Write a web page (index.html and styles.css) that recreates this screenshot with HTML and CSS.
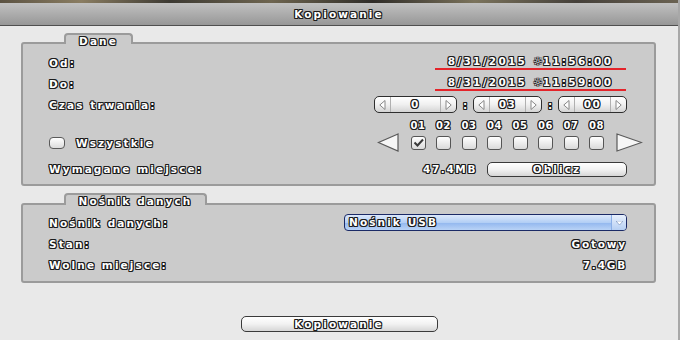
FILE: index.html
```html
<!DOCTYPE html>
<html lang="pl">
<head>
    <meta charset="UTF-8">
    <title>Kopiowanie</title>
    <link rel="stylesheet" href="styles.css">
</head>
<body>
    <div class="window">
        <div class="strip"></div>
        <div class="titlebar">Kopiowanie</div>
        <div class="content">
            <div class="group">
                <div class="tab tab-data">Dane</div>
                <div class="panel">
                    <div class="row">
                        <span>Od:</span>
                        <span class="datefield">8/31/2015 <span class="sun">☼</span>11:56:00</span>
                    </div>
                    <div class="row">
                        <span>Do:</span>
                        <span class="datefield">8/31/2015 <span class="sun">☼</span>11:59:00</span>
                    </div>
                    <div class="row">
                        <span>Czas trwania:</span>
                        <div class="duration">
                            <div class="spin spin-wide">
                                <span class="seg seg-l"><svg width="7" height="10"><polygon points="6,0.5 0.8,5 6,9.5" /></svg></span>
                                <span class="val">0</span>
                                <span class="seg seg-r"><svg width="7" height="10"><polygon points="1,0.5 6.2,5 1,9.5" /></svg></span>
                            </div>
                            <span class="colon">:</span>
                            <div class="spin">
                                <span class="seg seg-l"><svg width="7" height="10"><polygon points="6,0.5 0.8,5 6,9.5" /></svg></span>
                                <span class="val">03</span>
                                <span class="seg seg-r"><svg width="7" height="10"><polygon points="1,0.5 6.2,5 1,9.5" /></svg></span>
                            </div>
                            <span class="colon">:</span>
                            <div class="spin">
                                <span class="seg seg-l"><svg width="7" height="10"><polygon points="6,0.5 0.8,5 6,9.5" /></svg></span>
                                <span class="val">00</span>
                                <span class="seg seg-r"><svg width="7" height="10"><polygon points="1,0.5 6.2,5 1,9.5" /></svg></span>
                            </div>
                        </div>
                    </div>
                    <div class="cams">
                        <div class="all">
                            <span class="allbox"></span>
                            <span>Wszystkie</span>
                        </div>
                        <div class="cam-nav">
                            <svg class="arrow" width="22" height="19"><polygon points="21,1 1.5,9.5 21,18" /></svg>
                            <div class="cam-grid">
                                <span class="num">01</span>
                                <span class="num">02</span>
                                <span class="num">03</span>
                                <span class="num">04</span>
                                <span class="num">05</span>
                                <span class="num">06</span>
                                <span class="num">07</span>
                                <span class="num">08</span>
                                <span class="box checked"><svg width="11" height="9"><polyline points="1.5,4.5 4.5,7.5 10,1.5" /></svg></span>
                                <span class="box"></span>
                                <span class="box"></span>
                                <span class="box"></span>
                                <span class="box"></span>
                                <span class="box"></span>
                                <span class="box"></span>
                                <span class="box"></span>
                            </div>
                            <svg class="arrow arrow-r" width="27" height="19"><polygon points="1,1 25.5,9.5 1,18" /></svg>
                        </div>
                    </div>
                    <div class="row row-size">
                        <span>Wymagane miejsce:</span>
                        <span class="size">47.4MB</span>
                        <span class="btn btn-calc">Oblicz</span>
                    </div>
                </div>
            </div>

            <div class="group group-media">
                <div class="tab tab-media">Nośnik danych</div>
                <div class="panel panel-media">
                    <div class="row">
                        <span>Nośnik danych:</span>
                        <div class="select">
                            <span class="select-text">Nośnik USB</span>
                            <span class="select-btn"><svg width="7" height="4"><polygon points="0,0 7,0 3.5,4" /></svg></span>
                        </div>
                    </div>
                    <div class="row">
                        <span>Stan:</span>
                        <span class="right">Gotowy</span>
                    </div>
                    <div class="row">
                        <span>Wolne miejsce:</span>
                        <span class="right">7.4GB</span>
                    </div>
                </div>
            </div>

            <div class="footer">
                <span class="btn btn-copy">Kopiowanie</span>
            </div>
        </div>
    </div>
</body>
</html>
```

FILE: styles.css
```css
body {
    margin: 0;
    background: #e9e9e9;
    font-family: "DejaVu Sans", Verdana, sans-serif;
    font-weight: bold;
    font-size: 10.5px;
    letter-spacing: 2.1px;
    color: #fff;
    text-shadow: 1px 0 0 #1c1c1c, -1px 0 0 #1c1c1c, 0 1px 0 #1c1c1c, 0 -1px 0 #1c1c1c,
                 1px 1px 0 #1c1c1c, -1px -1px 0 #1c1c1c, 1px -1px 0 #1c1c1c, -1px 1px 0 #1c1c1c;
}
.window {
    width: 680px;
    height: 340px;
    overflow: hidden;
    box-sizing: border-box;
    border-right: 2px solid #a8a8a8;
}
.strip {
    height: 3px;
    background: linear-gradient(90deg, #5b5242 0%, #8a7d62 12%, #3d3a33 25%, #6e6550 40%, #2f2c28 55%, #7b735c 70%, #45403a 85%, #6a6252 100%);
}
.titlebar {
    height: 22px;
    line-height: 22px;
    text-align: center;
    background: linear-gradient(#c1c1c1, #979797);
    border-bottom: 1px solid #4f4f4f;
}
.content {
    padding-top: 7px;
}
.group {
    margin: 0 22px 0 21px;
}
.group-media {
    margin-top: 7px;
}
.tab {
    position: relative;
    z-index: 1;
    margin-left: 43px;
    margin-bottom: -2px;
    height: 9px;
    line-height: 12px;
    text-align: center;
    background: #cbcbcb;
    border: 2px solid #9b9b9b;
    border-bottom: 0;
    border-radius: 4px 4px 0 0;
}
.tab-data {
    width: 65px;
}
.tab-media {
    width: 139px;
    height: 10px;
}
.panel {
    background: #cbcbcb;
    border: 2px solid #9b9b9b;
    border-radius: 3px;
    padding: 8px 27px 6px 26px;
}
.panel-media {
    padding-top: 7px;
}
.row {
    display: flex;
    align-items: center;
    height: 21px;
}
.datefield {
    margin-left: auto;
    margin-right: 1px;
    width: 191px;
    line-height: 12px;
    text-align: center;
    letter-spacing: 2.3px;
    white-space: nowrap;
    border-bottom: 2px solid #e4242a;
}
.sun {
    font-size: 10px;
    letter-spacing: 0.5px;
}
.duration {
    margin-left: auto;
    display: flex;
    align-items: center;
}
.spin {
    display: flex;
    width: 69px;
    height: 17px;
    box-sizing: border-box;
    border: 1px solid #2e2e2e;
    border-radius: 5px;
    background: linear-gradient(#ffffff, #f0f0f0 50%, #d4d4d4);
}
.spin-wide {
    width: 83px;
}
.seg {
    width: 15px;
    display: flex;
    align-items: center;
    justify-content: center;
}
.seg-l {
    border-right: 1px solid #b0b0b0;
}
.seg-r {
    border-left: 1px solid #b0b0b0;
}
.seg polygon {
    fill: #fff;
    stroke: #888;
    stroke-width: 1;
}
.val {
    flex: 1;
    text-align: center;
    line-height: 15px;
    letter-spacing: 1.5px;
}
.colon {
    width: 16px;
    text-align: center;
    letter-spacing: 0;
}
.cams {
    display: flex;
    align-items: flex-end;
    padding-top: 6px;
}
.all {
    display: flex;
    align-items: center;
    height: 19px;
}
.allbox {
    width: 14px;
    height: 10px;
    margin-right: 11px;
    border: 1px solid #5a5a5a;
    border-radius: 4px;
    background: linear-gradient(#ffffff, #dcdcdc);
}
.cam-nav {
    margin-left: auto;
    margin-right: -16px;
    display: flex;
    align-items: flex-end;
}
.arrow polygon {
    fill: #f6f6f6;
    stroke: #5a5a5a;
    stroke-width: 1.2;
}
.arrow {
    margin-right: 12px;
}
.arrow-r {
    margin-right: 0;
    margin-left: 12px;
}
.cam-grid {
    display: grid;
    grid-template-columns: repeat(8, 15px);
    grid-template-rows: 10px 19px;
    column-gap: 10.5px;
    row-gap: 2px;
    align-items: center;
}
.num {
    font-size: 10px;
    letter-spacing: 0.5px;
    line-height: 10px;
    text-align: center;
    white-space: nowrap;
    margin: 0 -4px;
}
.box {
    width: 13px;
    height: 12px;
    border: 1px solid #555;
    border-radius: 3px;
    background: linear-gradient(#ffffff, #dadada);
    display: flex;
    align-items: center;
    justify-content: center;
}
.box polyline {
    fill: none;
    stroke: #3a3a3a;
    stroke-width: 2;
}
.row-size {
    margin-top: 8px;
    height: 18px;
}
.size {
    margin-left: auto;
    letter-spacing: 1.6px;
}
.btn {
    display: block;
    box-sizing: border-box;
    border: 1px solid #3a3a3a;
    border-radius: 5px;
    background: linear-gradient(#ffffff, #f2f2f2 50%, #d6d6d6);
    text-align: center;
}
.btn-calc {
    margin-left: 10px;
    width: 140px;
    height: 15px;
    line-height: 13px;
}
.select {
    margin-left: auto;
    width: 283px;
    height: 17px;
    box-sizing: border-box;
    display: flex;
    border: 1px solid #1b2a66;
    border-radius: 4px;
    background: linear-gradient(#dce8fb, #b3cff5 50%, #95b9ef 55%, #b9d3f6);
    overflow: hidden;
}
.select-text {
    flex: 1;
    padding-left: 4px;
    line-height: 15px;
}
.select-btn {
    width: 14px;
    display: flex;
    align-items: center;
    justify-content: center;
    border-left: 1px solid #8aaee6;
    background: linear-gradient(#e8f0fc, #b6cff3);
}
.select-btn polygon {
    fill: #fff;
    stroke: #6a86b8;
    stroke-width: 0.6;
}
.right {
    margin-left: auto;
    letter-spacing: 1.8px;
}
.footer {
    display: flex;
    justify-content: center;
    margin-top: 33px;
}
.btn-copy {
    width: 197px;
    height: 16px;
    line-height: 14px;
}
```
